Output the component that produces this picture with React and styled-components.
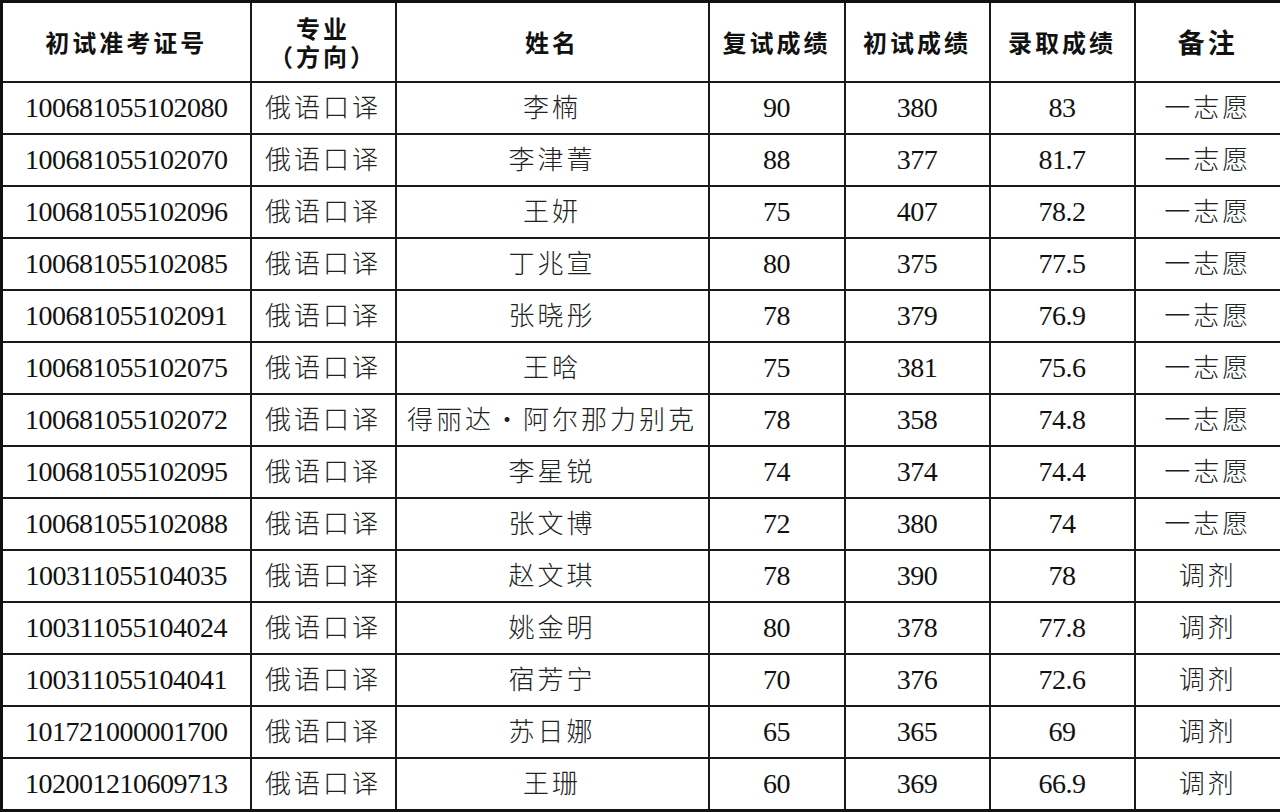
import React from 'react';
import styled, { createGlobalStyle } from 'styled-components';

const GlobalStyle = createGlobalStyle`
  html, body {
    margin: 0;
    padding: 0;
    background: #ffffff;
  }
`;

const Table = styled.table`
  width: 1280px;
  height: 812px;
  border-collapse: collapse;
  table-layout: fixed;
  border: 3px solid #111;
  color: #111;
`;

const Col = styled.col``;

const HeadCell = styled.th`
  height: 78px;
  padding: 0;
  border: 2px solid #1a1a1a;
  font-family: "Noto Sans CJK SC", "Noto Sans", sans-serif;
  font-weight: 600;
  font-size: ${props => props.big ? '27px' : '24px'};
  letter-spacing: 3px;
  line-height: 28px;
  text-align: center;
  vertical-align: middle;
`;

const Cell = styled.td`
  height: ${props => props.num ? '50px' : '46px'};
  padding: ${props => props.num ? '0' : '0 0 4px'};
  border: 2px solid #1a1a1a;
  text-align: center;
  vertical-align: middle;
  white-space: nowrap;
  line-height: 1;
  font-family: ${props => props.num
    ? '"Liberation Serif", "Times New Roman", serif'
    : '"Noto Sans CJK SC", "Noto Sans", sans-serif'};
  font-size: ${props => props.num ? '28px' : '26px'};
  font-weight: ${props => props.num ? 400 : 300};
  letter-spacing: ${props => props.num ? '-0.5px' : '3px'};
  color: ${props => props.num ? '#111' : '#222'};
`;

const rows = [
  ['100681055102080', '李楠', '90', '380', '83', '一志愿'],
  ['100681055102070', '李津菁', '88', '377', '81.7', '一志愿'],
  ['100681055102096', '王妍', '75', '407', '78.2', '一志愿'],
  ['100681055102085', '丁兆宣', '80', '375', '77.5', '一志愿'],
  ['100681055102091', '张晓彤', '78', '379', '76.9', '一志愿'],
  ['100681055102075', '王晗', '75', '381', '75.6', '一志愿'],
  ['100681055102072', '得丽达·阿尔那力别克', '78', '358', '74.8', '一志愿'],
  ['100681055102095', '李星锐', '74', '374', '74.4', '一志愿'],
  ['100681055102088', '张文博', '72', '380', '74', '一志愿'],
  ['100311055104035', '赵文琪', '78', '390', '78', '调剂'],
  ['100311055104024', '姚金明', '80', '378', '77.8', '调剂'],
  ['100311055104041', '宿芳宁', '70', '376', '72.6', '调剂'],
  ['101721000001700', '苏日娜', '65', '365', '69', '调剂'],
  ['102001210609713', '王珊', '60', '369', '66.9', '调剂'],
];

const widths = [249, 145, 313, 136, 145, 145, 147];

export default function App() {
  return (
    <>
      <GlobalStyle />
      <Table>
        <colgroup>
          {widths.map((w, i) => <Col key={i} style={{ width: w }} />)}
        </colgroup>
        <thead>
          <tr>
            <HeadCell>初试准考证号</HeadCell>
            <HeadCell>专业<br />（方向）</HeadCell>
            <HeadCell>姓名</HeadCell>
            <HeadCell>复试成绩</HeadCell>
            <HeadCell>初试成绩</HeadCell>
            <HeadCell>录取成绩</HeadCell>
            <HeadCell big>备注</HeadCell>
          </tr>
        </thead>
        <tbody>
          {rows.map((r) => (
            <tr key={r[0]}>
              <Cell num>{r[0]}</Cell>
              <Cell>俄语口译</Cell>
              <Cell>{r[1]}</Cell>
              <Cell num>{r[2]}</Cell>
              <Cell num>{r[3]}</Cell>
              <Cell num>{r[4]}</Cell>
              <Cell>{r[5]}</Cell>
            </tr>
          ))}
        </tbody>
      </Table>
    </>
  );
}
